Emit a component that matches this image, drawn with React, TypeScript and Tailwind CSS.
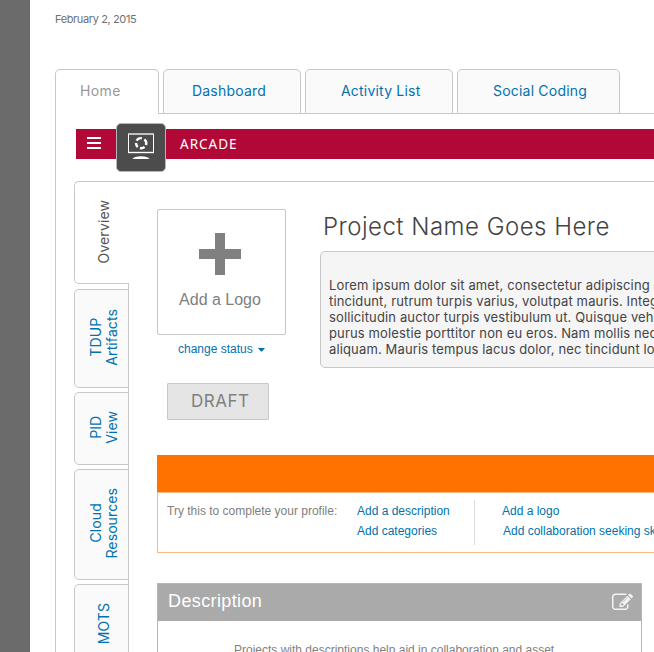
import type { ReactNode } from "react";

function TopTab({ label, className }: { label: string; className: string }) {
  return (
    <div className={`h-[45px] shrink-0 rounded-t-[5px] border border-[#c8c8c8] text-[14px] leading-[42px] tracking-[0.2px] ${className}`}>
      <span className="whitespace-nowrap">{label}</span>
    </div>
  );
}

function SideTab({ children, className }: { children: ReactNode; className: string }) {
  return (
    <div className={`flex w-[55px] shrink-0 items-center justify-center rounded-l-[5px] border border-[#c8c8c8] pb-[2px] pl-[4px] text-[14px] leading-4 tracking-[0.1px] ${className}`}>
      <div className="rotate-180 text-center whitespace-nowrap [writing-mode:vertical-rl]">{children}</div>
    </div>
  );
}

function MonitorIcon() {
  return (
    <svg width="28" height="28" viewBox="0 0 28 28" fill="none" stroke="white">
      <path d="M1.5 2v18.5h25V2" strokeWidth="1" />
      <path d="M1 2h26" strokeWidth="1.6" stroke="#ddd" />
      <path d="M1 20.5h26" strokeWidth="1.4" />
      <g strokeWidth="2.4">
        <path d="M9.6 8.6a5.2 5.2 0 0 1 5.2-2.4" />
        <path d="M17.4 7.4a5.2 5.2 0 0 1 1.6 5.6" />
        <path d="M17.6 15a5.2 5.2 0 0 1-4.6 1" />
        <path d="M10.8 15a5.2 5.2 0 0 1-1.8-4" />
      </g>
      <path d="M5.5 27c1-2 4-2.8 8.5-2.8s7.5.8 8.5 2.8z" fill="white" stroke="none" />
    </svg>
  );
}

function EditIcon() {
  return (
    <svg width="21" height="21" viewBox="0 0 1792 1792" fill="#f4f4f4">
      <path d="M888 1184l116-116-152-152-116 116v56h96v96h56zm440-720q-16-16-33 1l-350 350q-17 17-1 33t33-1l350-350q17-17 1-33zm80 594v190q0 119-84.5 203.5t-203.5 84.5h-832q-119 0-203.5-84.5t-84.5-203.5v-832q0-119 84.5-203.5t203.5-84.5h832q63 0 117 25 15 7 18 23 3 17-9 29l-49 49q-14 14-32 8-23-6-45-6h-832q-66 0-113 47t-47 113v832q0 66 47 113t113 47h832q66 0 113-47t47-113v-126q0-13 9-22l64-64q15-15 35-7t20 29zm-96-738l288 288-672 672h-288v-288zm444 132l-92 92-288-288 92-92q28-28 68-28t68 28l152 152q28 28 28 68t-28 68z" />
    </svg>
  );
}

const lines = [
  "Lorem ipsum dolor sit amet, consectetur adipiscing elit. Cras",
  "tincidunt, rutrum turpis varius, volutpat mauris. Integer et",
  "sollicitudin auctor turpis vestibulum ut. Quisque vehicula",
  "purus molestie porttitor non eu eros. Nam mollis nec risus",
  "aliquam. Mauris tempus lacus dolor, nec tincidunt lorem",
];

export default function App() {
  return (
    <div className="flex h-[652px] w-[654px] overflow-hidden bg-white font-['Inter',sans-serif]">
      <aside className="w-[30px] shrink-0 bg-[#6b6b6b]" />
      <main className="w-[624px] shrink-0 pl-[25px]">
        <div className="h-[69px] pt-[11px] text-[11px] leading-4 tracking-[-0.38px] text-[#707070]">February 2, 2015</div>
        <nav className="flex w-[599px]">
          <TopTab label="Home" className="w-[104px] border-b-0 bg-white pl-[24px] tracking-[0.4px] text-[#999]" />
          <div className="flex flex-1 gap-1 border-b border-[#c8c8c8] pl-1">
            <TopTab label="Dashboard" className="-mb-px w-[138px] bg-[#fafafa] pl-[28px] text-[#0072b0]" />
            <TopTab label="Activity List" className="-mb-px w-[148px] bg-[#fafafa] pl-[35px] text-[#0072b0]" />
            <TopTab label="Social Coding" className="-mb-px w-[163px] bg-[#fafafa] pl-[35px] text-[#0072b0]" />
          </div>
        </nav>
        <section className="h-[538px] w-[599px] overflow-hidden border-l border-[#c8c8c8] pt-[15px]">
          <header className="ml-5 flex h-[30px] items-center bg-[#b20838] pl-[11px]">
            <div className="mb-[2px] flex w-[14px] flex-col gap-[3px]">
              <span className="h-[2px] bg-white" />
              <span className="h-[2px] bg-white" />
              <span className="h-[2px] bg-white" />
            </div>
            <div className="-mt-[6px] -mb-[13px] ml-[15px] flex h-[49px] w-[50px] shrink-0 items-center justify-center rounded-[5px] border border-[#b5b5b5] bg-[#4c4c4c] pb-[3px]">
              <MonitorIcon />
            </div>
            <span className="ml-[14px] font-['Noto_Sans',sans-serif] text-[13.5px] leading-4 tracking-[1px] text-white">ARCADE</span>
          </header>
          <div className="mt-[22px] ml-[18px] flex h-[471px]">
            <div className="flex w-[55px] shrink-0 flex-col gap-1">
              <SideTab className="mb-px h-[103px] border-r-0 bg-white text-[#555]">Overview</SideTab>
              <SideTab className="h-[99px] bg-[#fafafa] text-[#0072b0]">TDUP<br />Artifacts</SideTab>
              <SideTab className="h-[73px] bg-[#fafafa] text-[#0072b0]">PID<br />View</SideTab>
              <SideTab className="h-[111px] bg-[#fafafa] text-[#0072b0]">Cloud<br />Resources</SideTab>
              <SideTab className="h-[82px] bg-[#fafafa] text-[#0072b0]">MOTS</SideTab>
            </div>
            <div className="-ml-px flex w-px shrink-0 flex-col pt-[102px]">
              <div className="flex-1 bg-[#c8c8c8]" />
            </div>
            <div className="min-w-0 flex-1 border-t border-[#c8c8c8] pl-[28px]">
              <div className="flex h-[273px] pt-[27px]">
                <div className="w-[129px] shrink-0 font-['Liberation_Sans',Arial,sans-serif]">
                  <div className="flex h-[126px] flex-col items-center rounded-[2px] border border-[#c8c8c8] pt-[23px] pr-[3px]">
                    <svg width="42" height="42" viewBox="0 0 42 42" fill="#808080">
                      <path d="M16 0h10v16h16v10H26v16H16V26H0V16h16z" />
                    </svg>
                    <div className="mt-[15px] text-[16px] leading-5 text-[#808080]">Add a Logo</div>
                  </div>
                  <div className="mt-[6px] flex items-center pl-[21px] text-[12px] leading-4 text-[#0072b0]">
                    change status
                    <svg className="mt-px ml-[5px]" width="7" height="4" viewBox="0 0 7 4" fill="currentColor">
                      <path d="M0 0h7L4 3.5H3z" />
                    </svg>
                  </div>
                  <div className="mt-[26px] ml-[10px] h-[37px] w-[102px] rounded-[1px] border border-[#c8c8c8] bg-[#e5e5e5] pl-[23px] font-['Inter',sans-serif] text-[17px] leading-[35px] tracking-[0.5px] text-[#808080]">DRAFT</div>
                </div>
                <div className="ml-[34px] min-w-0 flex-1">
                  <h1 className="h-[42px] pl-[3px] text-[24px] leading-[35px] font-light tracking-[0.48px] whitespace-nowrap text-[#444]">Project Name Goes Here</h1>
                  <div className="h-[117px] w-[400px] rounded-[5px] border border-[#c8c8c8] bg-[#f5f5f5] pt-[25px] pl-[8px] text-[13px] leading-4 tracking-[0.14px] text-[#444]">
                    {lines.map((line) => (
                      <div key={line} className="whitespace-nowrap">{line}</div>
                    ))}
                  </div>
                </div>
              </div>
              <div className="h-[37px] bg-[#ff7200]" />
              <div className="flex h-[61px] w-[560px] border border-[#ffb781] pt-[8px] pl-[9px] font-['Liberation_Sans',Arial,sans-serif] text-[12px] leading-5 whitespace-nowrap text-[#0072b0]">
                <div className="w-[190px] shrink-0 text-[#808080]">Try this to complete your profile:</div>
                <div className="w-[117px] shrink-0">Add a description<br />Add categories</div>
                <div className="-mt-px h-[45px] border-l border-[#ddd] pt-px pl-[27px]">Add a logo<br /><span className="pl-px">Add collaboration seeking skills</span></div>
              </div>
              <article className="mt-[30px] h-[90px] w-[485px] border border-[#b5b5b5] font-['Liberation_Sans',Arial,sans-serif]">
                <div className="flex h-[37px] items-center justify-between bg-[#aaa] pr-[8px] pl-[10px] text-[18px] text-white">
                  <span className="pb-[3px] tracking-[0.38px]">Description</span>
                  <EditIcon />
                </div>
                <div className="pt-[21px] pl-[76px] text-[12px] leading-4 text-[#808080]">Projects with descriptions help aid in collaboration and asset</div>
              </article>
            </div>
          </div>
        </section>
      </main>
    </div>
  );
}
